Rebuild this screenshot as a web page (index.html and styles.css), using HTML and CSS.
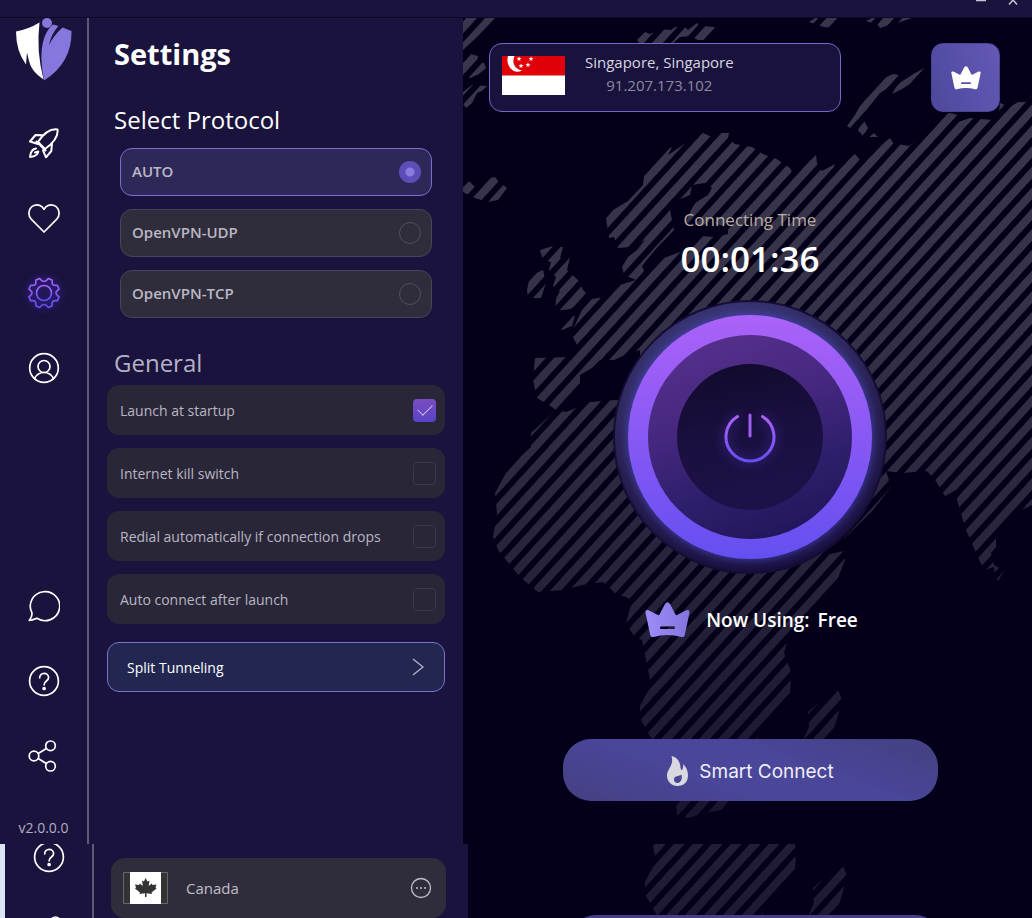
FILE: index.html
```html
<!doctype html>
<html lang="en">
<head>
<meta charset="utf-8">
<title>VPN Settings</title>
<link rel="stylesheet" href="styles.css">
</head>

<body>
<svg class="defs" aria-hidden="true">
	<defs>
		<linearGradient id="neon" x1="0" y1="0" x2="0" y2="1">
			<stop offset="0" stop-color="#ab62f8"/>
			<stop offset="1" stop-color="#654ff0"/>
		</linearGradient>
		<linearGradient id="landFill" gradientUnits="userSpaceOnUse" x1="0" y1="120" x2="0" y2="820">
			<stop offset="0" stop-color="#38354c"/>
			<stop offset="0.25" stop-color="#363349"/>
			<stop offset="1" stop-color="#19152f"/>
		</linearGradient>
		<pattern id="stripes" width="14" height="14" patternUnits="userSpaceOnUse" patternTransform="translate(902 180) rotate(42.4)">
			<rect x="0" y="0" width="3" height="14" fill="#05001a"/>
			<rect x="11" y="0" width="3" height="14" fill="#05001a"/>
		</pattern>
		<symbol id="help" viewBox="0 0 32 32">
			<circle cx="16" cy="16" r="14.400"/>
			<path d="M11.700 12.800c0-2.600 1.900-4.500 4.400-4.500s4.500 1.800 4.500 4.200c0 3.500-4.500 3.500-4.500 7.300"/>
			<circle cx="16.100" cy="23.500" r="1" fill="#fff"/>
		</symbol>
		<symbol id="share" viewBox="0 0 32 32">
			<circle cx="6" cy="16" r="4.800"/>
			<circle cx="22.500" cy="5.800" r="4.800"/>
			<circle cx="22.500" cy="26.200" r="4.800"/>
			<path d="M10.200 13.400l8.200-5M10.200 18.600l8.200 5"/>
		</symbol>
		<symbol id="crown" viewBox="0 0 45 36">
			<path fill-rule="evenodd" d="M3.500 8.300Q0 7.300.6 11L5 32Q5.500 35.600 8.500 35Q22.500 31 36.500 35Q39.500 35.600 40 32L44.400 11Q45 7.300 41.500 8.300L32 13Q31 13.500 30.500 12.500L25 2Q22.500-1.500 20 2L14.500 12.500Q14 13.500 13 13ZM16 24.500Q15 24.600 15 25.800T16 27H29Q30 26.900 30 25.700T29 24.300Z"/>
		</symbol>
		<symbol id="world" viewBox="463 18 569 826">
			<g fill="url(#landFill)">
				<path d="M463 18H495L478 36 463 50Z"/>
				<path d="M463 62L470 54 478 56 477 62 484 63 486 68 479 74 470 78 463 76Z"/>
				<path d="M463 92L472 85 487 86 482 91 477 93 472 103 466 108 463 104Z"/>
				<path d="M463 180L470 182 475 187 483 179 495 177 498 181 507 188 498 200 487 202 475 198 463 192Z"/>
				<path d="M637 40L645 32 650 34 660 29 671 30 675 27 684 26 688 30 697 23 700 26 715 27 708 40 698 40 690 36 680 37 672 44 640 44Z"/>
				<path d="M809 22L815 18H842L832 28 824 27ZM866 21L872 18H912L900 22 892 24 880 28 878 25Z"/>
				<path d="M847 126L855 115 866 95 868 90 880 80 893 74 899 75 893 85 880 93 868 108 860 117 850 128ZM892 94L898 84 915 73 928 66 927 72 913 82 902 89ZM858 130L863 119 868 128 863 136ZM869 137L874 133 878 137Z"/>
				<path d="M609 238L606 218 613 210 628 201 643 185 644 175 650 168 654 158 662 150 672 147 668 155 680 147 695 136 703 133 712 137 720 133 729 133 728 138 735 144 752 147 765 155 775 158 790 168 792 172 802 168 816 155 817 163 822 171 835 164 833 170 848 160 855 154 860 160 870 157 885 142 890 138 893 143 909 146 930 130 944 115 950 113 958 115 955 123 970 118 992 120 984 127 999 112 1000 103 1010 107 1018 102 1027 102 1032 95V505L1019 511 1003 525 996 533 996 547 991 553 994 565 1004 571 998 581 995 577 994 567 985 570 980 562 966 530 957 500 956 490 945 496 935 480 927 471 902 473 886 471 891 487 873 510 862 521 845 538 826 555 844 551 845 560 838 578 826 598 822 601 804 615 789 633 784 653 791 672 790 698 775 716 760 733 748 760 738 785 729 803 722 810 710 812 688 818 677 815 676 805 665 770 651 738 640 718 640 706 651 685 645 655 642 640 634 636 626 623 631 605 628 598 615 593 603 582 582 585 564 590 538 592 520 577 498 550 493 537 497 513 495 493 506 473 522 455 531 447 531 433 556 410 549 405 537 398 533 380 535 358 571 357 577 345 571 333 582 310 592 299 604 297 620 285 636 280 624 275 622 267 628 257 637 250 645 240 630 247 618 248 614 237Z"/>
				<path d="M540 250L553 246 563 247 560 258 570 257 567 270 578 280 583 290 590 297 583 303 570 309 555 311 556 299 560 291 553 286 556 277 549 270 551 262 543 260Z"/>
				<path d="M530 276L543 270 546 283 541 298 528 298 527 290ZM558 327L567 317 575 316 572 326 562 330Z"/>
				<path d="M835 685L838 690 842 700 836 722 831 738 820 752 806 752 804 738 809 727 808 712 816 705 826 700 834 688Z"/>
			</g>
			<!-- inland seas -->
			<g fill="#05001a">
				<path d="M674 230L670 210 678 200 690 195 692 185 705 183 712 188 708 195 695 203 690 212 686 222 700 226 712 222 728 228 728 234 716 237 700 236 692 243 680 252 664 258 655 268 646 276 642 266 655 250Z"/>
				<path d="M558 410L572 398 580 385 580 375 592 368 600 360 614 360 625 355 640 350V402L615 400 590 402 566 412Z"/>
			</g>
			<rect x="463" y="18" width="569" height="826" fill="url(#stripes)"/>
		</symbol>
	</defs>
</svg>

<header class="titlebar">
	<button class="win-btn" type="button" aria-label="Minimize"><svg width="12" height="5" viewBox="0 0 12 5"><path d="M1 .5h10"/></svg></button>
	<button class="win-btn" type="button" aria-label="Close"><svg width="12" height="5" viewBox="0 0 12 5"><path d="M2 4.500L6 0l4 4.500"/></svg></button>
</header>

<div class="app">
	<nav class="sidebar">
		<svg class="logo" viewBox="0 0 56 63" role="img" aria-label="Logo">
			<path fill="#fff" d="M0 13.500Q13 11 23.500 4.500Q20 32 27.500 61.500Q15 53 13 43L11 34.500L10 46.500Q0 33 0 13.500Z"/>
			<path fill="#8577dc" d="M33 10.500Q35.500 8 37 6.500L42.500 8Q35 16 33 27.500Q37 18 46.500 9.500L55.500 13Q56 45 28 62.500Q21 27 33 10.500Z"/>
			<circle cx="31" cy="5" r="5" fill="#8577dc"/>
		</svg>
		<a class="nav-icon" href="#" aria-label="Connect">
			<svg class="bold" viewBox="0 0 32 32"><path d="M29.500 2.500C22.500 1.500 16 6 10 15L17 22C26 15.500 30.500 9.500 29.500 2.500ZM15.500 8.300L7.500 8 2 14.500l8 2.500M24 16.500l-.7 7.500L18 30.300l-3-7M8.500 14.500l9 9M8 21.500c-4 .5-5.500 3.500-6 8.500 5-.5 8-2.500 8.300-5.500l-3.300 1"/></svg>
		</a>
		<a class="nav-icon" href="#" aria-label="Favourites">
			<svg viewBox="0 0 32 32"><path d="M16 30L3.200 17.200C-.8 12.700.8 5.500 6 3.500c3.500-1.300 8-.3 10 3.800 2-4.100 6.500-5.100 10-3.800 5.200 2 6.800 9.200 2.800 13.700Z"/></svg>
		</a>
		<a class="nav-icon active" href="#" aria-label="Settings">
			<svg viewBox="0 0 32 32"><circle cx="16" cy="16" r="7.500"/><path d="M11.500 1.500C13 2.500 13.500 4.500 16 4.500s3-2 4.500-3l3.500 1.500c.5 1.600-.6 3.300.9 4.600s3 .4 4.600.9l1.500 3.500c-1 1.500-3 1.700-3 4s2 2.500 3 4l-1.500 3.500c-1.600.5-3.100-.4-4.600.9s-.4 3-.9 4.600l-3.500 1.500c-1.500-1-2-3-4.500-3s-3 2-4.500 3L8 29c-.5-1.600.6-3.300-.9-4.600s-3-.4-4.600-.9L1 20c1-1.500 3-1.700 3-4s-2-2.500-3-4l1.500-3.500c1.600-.5 3.100.4 4.600-.9S7.500 4.600 8 3Z"/></svg>
		</a>
		<a class="nav-icon" href="#" aria-label="Account">
			<svg viewBox="0 0 32 32"><circle cx="16" cy="16" r="14.300"/><circle cx="16" cy="14.500" r="6"/><path d="M6.500 26.500c2-4 5.500-6 9.500-6s7.500 2 9.500 6"/></svg>
		</a>
		<a class="nav-icon push" href="#" aria-label="Chat">
			<svg viewBox="0 0 32 32"><path d="M3.800 22.500A14.700 14.500 0 1 1 9 28.300C6.500 29.200 3.800 30.200 1.200 30.500 2.800 28.500 4.500 25 3.800 22.500Z"/></svg>
		</a>
		<a class="nav-icon" href="#" aria-label="Help"><svg viewBox="0 0 32 32"><use href="#help"/></svg></a>
		<a class="nav-icon" href="#" aria-label="Share"><svg viewBox="0 0 32 32"><use href="#share"/></svg></a>
		<span class="version">v2.0.0.0</span>
	</nav>

	<main class="settings">
		<h1>Settings</h1>
		<h2>Select Protocol</h2>
		<div class="protocols">
			<label class="protocol"><span>AUTO</span><input type="radio" name="protocol" checked></label>
			<label class="protocol"><span>OpenVPN-UDP</span><input type="radio" name="protocol"></label>
			<label class="protocol"><span>OpenVPN-TCP</span><input type="radio" name="protocol"></label>
		</div>
		<h2 class="dim">General</h2>
		<div class="options">
			<label class="option"><span>Launch at startup</span><input type="checkbox" checked></label>
			<label class="option"><span>Internet kill switch</span><input type="checkbox"></label>
			<label class="option"><span>Redial automatically if connection drops</span><input type="checkbox"></label>
			<label class="option"><span>Auto connect after launch</span><input type="checkbox"></label>
		</div>
		<button class="split" type="button">
			<span>Split Tunneling</span>
			<svg width="12" height="18" viewBox="0 0 12 18"><path d="M1 1l10 8L1 17"/></svg>
		</button>
	</main>

	<section class="hero">
		<svg class="map" viewBox="0 0 569 826" preserveAspectRatio="xMinYMin slice" aria-hidden="true"><use href="#world" width="569" height="826"/></svg>
		<div class="hero-top">
			<div class="location">
				<svg class="flag" width="63" height="39" viewBox="0 0 63 39" role="img" aria-label="Singapore flag">
					<path fill="#fff" d="M0 0h63v39H0z"/>
					<path fill="#e20008" d="M0 0h63v19.500H0z"/>
					<path fill="#fff" d="M6 0Q3.500 9 11 14.500Q15 17 20 14.500Q13 13 11.500 7Q11 3 12.500 0Z"/>
					<g fill="#fff">
						<path id="star" d="M17 .5l.7 1.500 1.700.1-1.300 1.200.4 1.700-1.500-.9-1.500.9.4-1.700-1.300-1.200 1.700-.1z"/>
						<use href="#star" x="12" y="0"/>
						<use href="#star" x="2" y="7"/>
						<use href="#star" x="9" y="6"/>
					</g>
				</svg>
				<div class="place">
					<span>Singapore, Singapore</span>
					<span class="ip">91.207.173.102</span>
				</div>
			</div>
			<button class="premium" type="button" aria-label="Premium"><svg width="30" height="24"><use href="#crown"/></svg></button>
		</div>

		<div class="status">
			<p class="caption">Connecting Time</p>
			<p class="timer">00:01:36</p>
			<button class="power" type="button" aria-label="Disconnect">
				<svg width="274" height="274" viewBox="0 0 274 274">
					<defs>
						<linearGradient id="halo" x1="0.300" y1="0" x2="0.600" y2="1">
							<stop offset="0" stop-color="#393572"/>
							<stop offset="0.500" stop-color="#28204f"/>
							<stop offset="1" stop-color="#190f3d"/>
						</linearGradient>
						<linearGradient id="disc" x1="0.300" y1="0" x2="0.650" y2="1">
							<stop offset="0" stop-color="#55308c"/>
							<stop offset="0.350" stop-color="#472880"/>
							<stop offset="0.700" stop-color="#2e1f6c"/>
							<stop offset="1" stop-color="#22165a"/>
						</linearGradient>
						<linearGradient id="core" x1="0.300" y1="0" x2="0.500" y2="1">
							<stop offset="0" stop-color="#120a2d"/>
							<stop offset="0.500" stop-color="#1b0f40"/>
							<stop offset="1" stop-color="#1e1149"/>
						</linearGradient>
						<filter id="glow" x="-20%" y="-20%" width="140%" height="140%"><feGaussianBlur stdDeviation="6"/></filter>
						<clipPath id="haloClip"><circle cx="137" cy="137" r="136"/></clipPath>
					</defs>
					<circle cx="137" cy="137" r="136" fill="url(#halo)" stroke="#150d33" stroke-width="2"/>
					<circle cx="137" cy="137" r="122" fill="#4d4fd0" opacity="0.850" filter="url(#glow)" clip-path="url(#haloClip)"/>
					<circle cx="137" cy="137" r="122" fill="url(#neon)"/>
					<circle cx="137" cy="137" r="102" fill="url(#disc)"/>
					<circle cx="137" cy="137" r="73" fill="url(#core)"/>
					<g class="power-glyph">
						<path d="M124.500 116.500A24 24 0 1 0 149.500 116.500" stroke="#5b47d8" stroke-width="5" opacity="0.400" filter="url(#glow)"/>
						<path d="M124.500 116.500A24 24 0 1 0 149.500 116.500" stroke="url(#neon)"/>
						<path d="M137 115v21" stroke="#9d5ff0"/>
					</g>
				</svg>
			</button>
			<p class="plan">
				<svg width="45" height="36" viewBox="0 0 45 36">
					<linearGradient id="lilac"><stop offset="0" stop-color="#9d8df8"/><stop offset="1" stop-color="#8474de"/></linearGradient>
					<use href="#crown" fill="url(#lilac)"/>
				</svg>
				<span>Now Using:</span>
				<span>Free</span>
			</p>
			<button class="smart" type="button">
				<svg width="23" height="30" viewBox="0 0 23 30"><path fill-rule="evenodd" d="M5.500 0C11 1 14.500 6 14.500 12L15.500 14.500C17 13 17.500 11 17 8C20.500 11 22 15 22 19.500C22 26 17.500 30 11.500 30S1 25.500 1 19.500C1 13 8.500 9 5.500 0ZM15.500 18.500C13 20.500 8 19.500 8 23.500C8 25.500 9.500 27 11.500 27C15 26.500 16.500 22.500 15.500 18.500Z"/></svg>
				<span>Smart Connect</span>
			</button>
		</div>
	</section>
</div>

<!-- second window, showing from under the first -->
<div class="behind">
	<nav class="sidebar behind-nav">
		<a class="nav-icon" href="#" aria-label="Help"><svg viewBox="0 0 32 32"><use href="#help"/></svg></a>
		<a class="nav-icon" href="#" aria-label="Share"><svg viewBox="0 0 32 32"><use href="#share"/></svg></a>
	</nav>
	<div class="countries">
		<div class="country">
			<svg width="45" height="32" viewBox="0 0 45 32" role="img" aria-label="Canada flag">
				<path fill="#333" stroke="#666" d="M.5.500h44v31H.5z"/>
				<path fill="#fff" d="M7 0h31v32H7z"/>
				<path fill="#333" d="M22.500 6l2 3.500 2-1-.8 5.500 3-2.500.8 1.500 4-.5-1 3 1 1-5 4 .5 1.500-5.500-.8V25h-1.500v-3.800l-5.500.8.500-1.500-5-4 1-1-1-3 4 .5.8-1.500 3 2.500-.8-5.500 2 1z"/>
			</svg>
			<span>Canada</span>
			<button class="more" type="button" aria-label="More">
				<svg width="22" height="22" viewBox="0 0 22 22"><circle cx="11" cy="11" r="9.500" fill="none" stroke="#c0bfc8" stroke-width="1.300"/><g fill="#c0bfc8"><circle cx="7" cy="11" r="1"/><circle cx="11" cy="11" r="1"/><circle cx="15" cy="11" r="1"/></g></svg>
			</button>
		</div>
	</div>
	<div class="behind-hero">
		<svg class="map" viewBox="0 650 569 176" preserveAspectRatio="xMinYMin slice" aria-hidden="true"><use href="#world" width="569" height="826"/></svg>
		<div class="smart-edge"></div>
	</div>
</div>
</body>
</html>
```
FILE: styles.css
```css
* {margin:0; padding:0; box-sizing:border-box;}
body {display:flex; flex-direction:column; min-height:100vh; background:#05001a; color:#fff; font-family:"Open Sans","Noto Sans",sans-serif; font-size:14px;}
button {border:0; background:none; color:inherit; font:inherit; cursor:pointer;}
a {color:inherit;}
svg {display:block; flex:none;}
.defs {position:absolute; width:0; height:0;}

/* title bar */
.titlebar {display:flex; justify-content:flex-end; align-items:flex-start; gap:20px; height:18px; padding-right:13px; background:#1a133d; border-bottom:1px solid #0e0829;}
.win-btn svg {fill:none; stroke:#c8c6d4; stroke-width:1.500;}

.app {display:grid; grid-template-columns:89px 374px 1fr;}

/* sidebar */
.sidebar {display:flex; flex-direction:column; align-items:center; gap:43px; background:#19133d; border-right:2px solid #5f5a78;}
.app .sidebar {padding-bottom:6px;}
.logo {width:56px; height:63px; margin-bottom:3px;}
.nav-icon {display:block; width:32px; height:32px;}
.nav-icon svg {width:32px; height:32px; fill:none; stroke:#fff; stroke-width:1.700; stroke-linecap:round; stroke-linejoin:round;}
.nav-icon .bold {stroke-width:2;}
.nav-icon.active svg {stroke:url(#neon); filter:drop-shadow(0 0 4px #4a2fd0); overflow:visible;}
.push {margin-top:auto;}
.version {margin-top:3px; color:#b3b0c2; line-height:20px;}

/* settings */
.settings {padding:16px 18px 0; background:#19133d;}
h1 {padding-left:7px; font-size:29px; line-height:40px; font-weight:700;}
h2 {margin-top:30px; padding-left:7px; font-size:24px; line-height:32px; font-weight:400;}
h2.dim {margin-top:29px; color:#b6b2c6;}
.protocols {display:flex; flex-direction:column; gap:13px; margin:12px 13px 0;}
.protocol {display:flex; align-items:center; justify-content:space-between; height:48px; padding:0 10px 0 11px; border:1px solid #47445a; border-radius:12px; background:#2f2d3c; color:#bab8c4; font-size:15px; font-weight:600;}
.protocol span {padding-bottom:3px;}
.protocol:has(input:checked) {border-color:#7d6fd0; background:#2e2859;}
.protocol input {appearance:none; width:22px; height:22px; border:1px solid #504d62; border-radius:50%;}
.protocol input:checked {border:0; background:radial-gradient(circle, #8b7ce2 0 4px, #5d4db8 5px);}
.options {display:flex; flex-direction:column; gap:13px; margin-top:6px;}
.option {display:flex; align-items:center; justify-content:space-between; height:50px; padding:0 9px 0 13px; border-radius:12px; background:#292638; color:#b9b6c4;}
.option input {appearance:none; display:grid; place-items:center; width:23px; height:23px; border:1px solid #3a3750; border-radius:4px;}
.option input:checked {border:0; background:linear-gradient(#7b4cc0, #5843c6);}
.option input:checked::after {content:""; width:13px; height:7px; margin-top:-4px; border:solid #c9bdea; border-width:0 0 1px 1px; transform:rotate(-45deg);}
.split {display:flex; align-items:center; justify-content:space-between; width:100%; height:50px; margin-top:18px; padding:0 20px 0 19px; border:1px solid #7b70cc; border-radius:12px; background:#212751;}
.split svg {fill:none; stroke:#b5b3c8; stroke-width:1.300;}

/* hero */
.hero {position:relative; padding:25px 0 43px; overflow:hidden; background:#05001a;}
.map {position:absolute; left:0; top:0; width:100%; height:100%;}
.hero-top, .status {position:relative;}
.hero-top {display:flex; justify-content:space-between; gap:20px; padding:0 32px 0 26px;}
.location {display:flex; flex:0 1 352px; gap:20px; height:69px; padding:12px; border:1px solid #7468c4; border-radius:13px; background:#19123c;}
.place {display:flex; flex-direction:column; align-items:center; margin-top:-5px; color:#d8d6e2; font-size:15px; line-height:23px;}
.ip {color:#8d8aa0;}
.premium {display:flex; align-items:center; justify-content:center; width:69px; height:69px; border:1px solid #4b4391; border-radius:12px; background:linear-gradient(70deg, #4d489c, #6459b6);}
.premium svg {fill:#fff;}
.status {display:flex; flex-direction:column; align-items:center; padding:96px 0 0 5px;}
.caption {color:#b7aca0; font-size:17px; line-height:24px;}
.timer {margin-top:3px; font-size:35px; line-height:48px; font-weight:600;}
.power {margin-top:17px; border-radius:50%;}
.power-glyph {fill:none; stroke-width:3; stroke-linecap:round;}
.plan {display:flex; align-items:center; gap:8px; margin-top:28px; padding-left:3px; font-size:19px; line-height:36px; font-weight:600;}
.plan svg {margin-right:8px;}
.smart {display:flex; align-items:center; justify-content:center; gap:10px; width:375px; height:62px; margin-top:101px; padding-top:2px; border-radius:28px; background:linear-gradient(20deg, #454082, #4a469a 40%, #4a469a 60%, #444080); color:#f0eff6; font-family:Inter,sans-serif; font-size:19px;}
.smart svg {fill:#d9d8de;}

/* window behind */
.behind {display:grid; grid-template-columns:89px 374px 1fr; flex:1 0 74px; height:74px; border-left:5px solid #dbe5f4; overflow:hidden;}
.behind-nav {height:74px; overflow:hidden;}
.behind-nav .nav-icon:first-child {margin-top:-3px;}
.countries {padding:14px 22px 0 17px; background:#19133d; overflow:hidden;}
.country {display:flex; align-items:center; height:60px; padding:0 14px 0 12px; border-radius:14px; background:#2f2d3c; color:#c0bec8; font-size:15px;}
.country span {flex:1; margin-left:18px;}
.behind-hero {position:relative; padding:71px 0 0 11px; overflow:hidden; background:#05001a;}
.behind-hero .map {height:176px;}
.smart-edge {position:relative; width:375px; height:62px; margin:0 auto; border-radius:28px; background:#454087;}
```
